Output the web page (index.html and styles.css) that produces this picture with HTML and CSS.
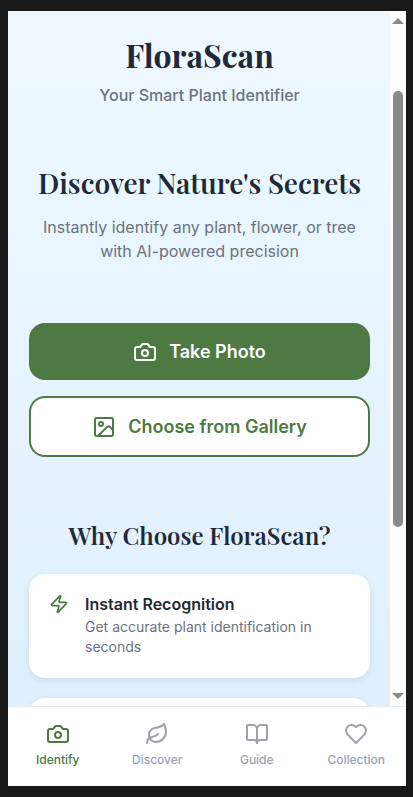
FILE: index.html
```html
<!DOCTYPE html>
<html lang="en">
<head>
<meta charset="utf-8">
<meta name="viewport" content="width=device-width, initial-scale=1">
<title>FloraScan</title>
<link rel="stylesheet" href="styles.css">
</head>
<body>
<div class="app">
  <div class="viewport">
    <main class="content">
      <header class="brand">
        <h1>FloraScan</h1>
        <p>Your Smart Plant Identifier</p>
      </header>
      <section class="hero">
        <h2>Discover Nature's Secrets</h2>
        <p>Instantly identify any plant, flower, or tree with AI-powered precision</p>
      </section>
      <div class="actions">
        <button class="btn btn-primary" type="button">
          <svg class="icon" viewBox="0 0 24 24" aria-hidden="true"><path d="M14.500 4h-5L7 7H4a2 2 0 0 0-2 2v9a2 2 0 0 0 2 2h16a2 2 0 0 0 2-2V9a2 2 0 0 0-2-2h-3z"/><circle cx="12" cy="13" r="3"/></svg>
          <span>Take Photo</span>
        </button>
        <button class="btn btn-outline" type="button">
          <svg class="icon" viewBox="0 0 24 24" aria-hidden="true"><rect x="3" y="3" width="18" height="18" rx="2"/><circle cx="9" cy="9" r="2"/><path d="m21 15-3.100-3.100a2 2 0 0 0-2.800 0L6 21"/></svg>
          <span>Choose from Gallery</span>
        </button>
      </div>
      <section class="features">
        <h2>Why Choose FloraScan?</h2>
        <ul>
          <li class="card">
            <svg class="icon icon-small" viewBox="0 0 24 24" aria-hidden="true"><path d="M4 14a1 1 0 0 1-.8-1.600l9.900-10.200a.5.5 0 0 1 .9.500l-1.900 6A1 1 0 0 0 13 10h7a1 1 0 0 1 .8 1.600l-9.900 10.200a.5.5 0 0 1-.9-.5l1.900-6A1 1 0 0 0 11 14z"/></svg>
            <div>
              <h3>Instant Recognition</h3>
              <p>Get accurate plant identification in seconds</p>
            </div>
          </li>
          <li class="card"></li>
        </ul>
      </section>
    </main>
    <div class="scrollbar" aria-hidden="true">
      <svg class="arrow" viewBox="0 0 12 6"><path d="M6 0l6 6H0z"/></svg>
      <div class="track"><div class="thumb"></div></div>
      <svg class="arrow" viewBox="0 0 12 6"><path d="M0 0h12L6 6z"/></svg>
    </div>
  </div>
  <nav class="tabs">
    <a class="tab active" href="#identify" aria-current="page">
      <svg class="icon" viewBox="0 0 24 24" aria-hidden="true"><path d="M14.500 4h-5L7 7H4a2 2 0 0 0-2 2v9a2 2 0 0 0 2 2h16a2 2 0 0 0 2-2V9a2 2 0 0 0-2-2h-3z"/><circle cx="12" cy="13" r="3"/></svg>
      <span>Identify</span>
    </a>
    <a class="tab" href="#discover">
      <svg class="icon" viewBox="0 0 24 24" aria-hidden="true"><path d="M11 20A7 7 0 0 1 9.800 6.100C15.500 5 17 4.480 19 2c1 2 2 4.180 2 8 0 5.500-4.780 10-10 10Z"/><path d="M2 21c0-3 1.850-5.360 5.080-6C9.500 14.520 12 13 13 12"/></svg>
      <span>Discover</span>
    </a>
    <a class="tab" href="#guide">
      <svg class="icon" viewBox="0 0 24 24" aria-hidden="true"><path d="M12 7v14"/><path d="M3 18a1 1 0 0 1-1-1V4a1 1 0 0 1 1-1h5a4 4 0 0 1 4 4 4 4 0 0 1 4-4h5a1 1 0 0 1 1 1v13a1 1 0 0 1-1 1h-6a3 3 0 0 0-3 3 3 3 0 0 0-3-3z"/></svg>
      <span>Guide</span>
    </a>
    <a class="tab" href="#collection">
      <svg class="icon" viewBox="0 0 24 24" aria-hidden="true"><path d="M19 14c1.490-1.460 3-3.210 3-5.500A5.500 5.500 0 0 0 16.500 3c-1.760 0-3 .5-4.500 2-1.500-1.500-2.740-2-4.500-2A5.500 5.500 0 0 0 2 8.500c0 2.300 1.500 4.050 3 5.500l7 7Z"/></svg>
      <span>Collection</span>
    </a>
  </nav>
</div>
</body>
</html>
```
FILE: styles.css
```css
* {
  box-sizing: border-box;
}

body,
h1,
h2,
h3,
p,
ul {
  margin: 0;
  padding: 0;
}

body {
  height: 100vh;
  padding: 11px 7px 11px 8px;
  background: #181818;
  color: #1f2937;
  font-family: Inter, "Liberation Sans", sans-serif;
  font-size: 16px;
  line-height: 24px;
}

h1,
h2 {
  font-family: "Playfair Display", "Liberation Serif", serif;
  font-weight: 600;
}

.app {
  display: flex;
  flex-direction: column;
  height: 100%;
  background: #fff;
}

.viewport {
  display: flex;
  flex: 1;
  min-height: 0;
}

.content {
  flex: 1;
  min-width: 0;
  overflow: hidden;
  padding: 24px 20px 0 21px;
  background: linear-gradient(#f0f8ff, #ebf7ff 25%, #deeffd);
}

.brand,
.hero {
  text-align: center;
}

.brand h1 {
  font-size: 32px;
  font-weight: 700;
  line-height: 40px;
}

.brand p {
  margin-top: 8px;
  color: #6b7280;
  font-weight: 500;
}

.hero {
  margin-top: 56px;
}

.hero h2 {
  font-size: 28px;
  line-height: 40px;
}

.hero p {
  margin-top: 12px;
  color: #6b7280;
}

.actions {
  display: flex;
  flex-direction: column;
  gap: 16px;
  margin-top: 60px;
}

.btn {
  display: flex;
  align-items: center;
  justify-content: center;
  gap: 12px;
  padding: 16px;
  border: 0;
  border-radius: 16px;
  font: 600 18px/25px Inter, "Liberation Sans", sans-serif;
}

.btn-primary {
  background: #4d7942;
  color: #fff;
}

.btn-outline {
  border: 2px solid #4d7942;
  background: #fff;
  color: #4d7942;
}

.icon {
  flex: none;
  width: 24px;
  height: 24px;
  fill: none;
  stroke: currentColor;
  stroke-width: 2;
  stroke-linecap: round;
  stroke-linejoin: round;
}

.icon-small {
  width: 20px;
  height: 20px;
  color: #4d7942;
}

.features {
  margin-top: 60px;
}

.features h2 {
  font-size: 24px;
  line-height: 36px;
  text-align: center;
}

.features ul {
  display: flex;
  flex-direction: column;
  gap: 20px;
  margin-top: 21px;
  list-style: none;
}

.card {
  display: flex;
  gap: 16px;
  min-height: 104px;
  padding: 20px;
  border-radius: 16px;
  background: #fff;
  box-shadow: 0 2px 6px rgba(31, 60, 90, 0.1);
}

.card h3 {
  font-size: 16px;
  font-weight: 600;
  line-height: 20px;
}

.card p {
  margin-top: 3px;
  color: #6b7280;
  font-size: 14px;
  line-height: 20px;
}

.scrollbar {
  display: flex;
  flex-direction: column;
  align-items: center;
  width: 16px;
  padding: 7px 0;
  background: #fcfcfc;
}

.arrow {
  flex: none;
  width: 12px;
  height: 6px;
  fill: #8a8a8a;
}

.track {
  display: grid;
  flex: 1;
  grid-template-rows: 29fr 11fr;
  width: 10px;
  padding-top: 67px;
}

.thumb {
  border-radius: 5px;
  background: #8b8b8b;
}

.tabs {
  display: grid;
  grid-template-columns: repeat(4, 1fr);
  padding: 15px 0 16px;
  border-top: 1px solid #e9edf1;
}

.tab {
  display: flex;
  flex-direction: column;
  align-items: center;
  gap: 4px;
  color: #9ca3af;
  font-size: 12px;
  font-weight: 500;
  line-height: 20px;
  text-decoration: none;
}

.tab.active {
  color: #4d7942;
}
```
